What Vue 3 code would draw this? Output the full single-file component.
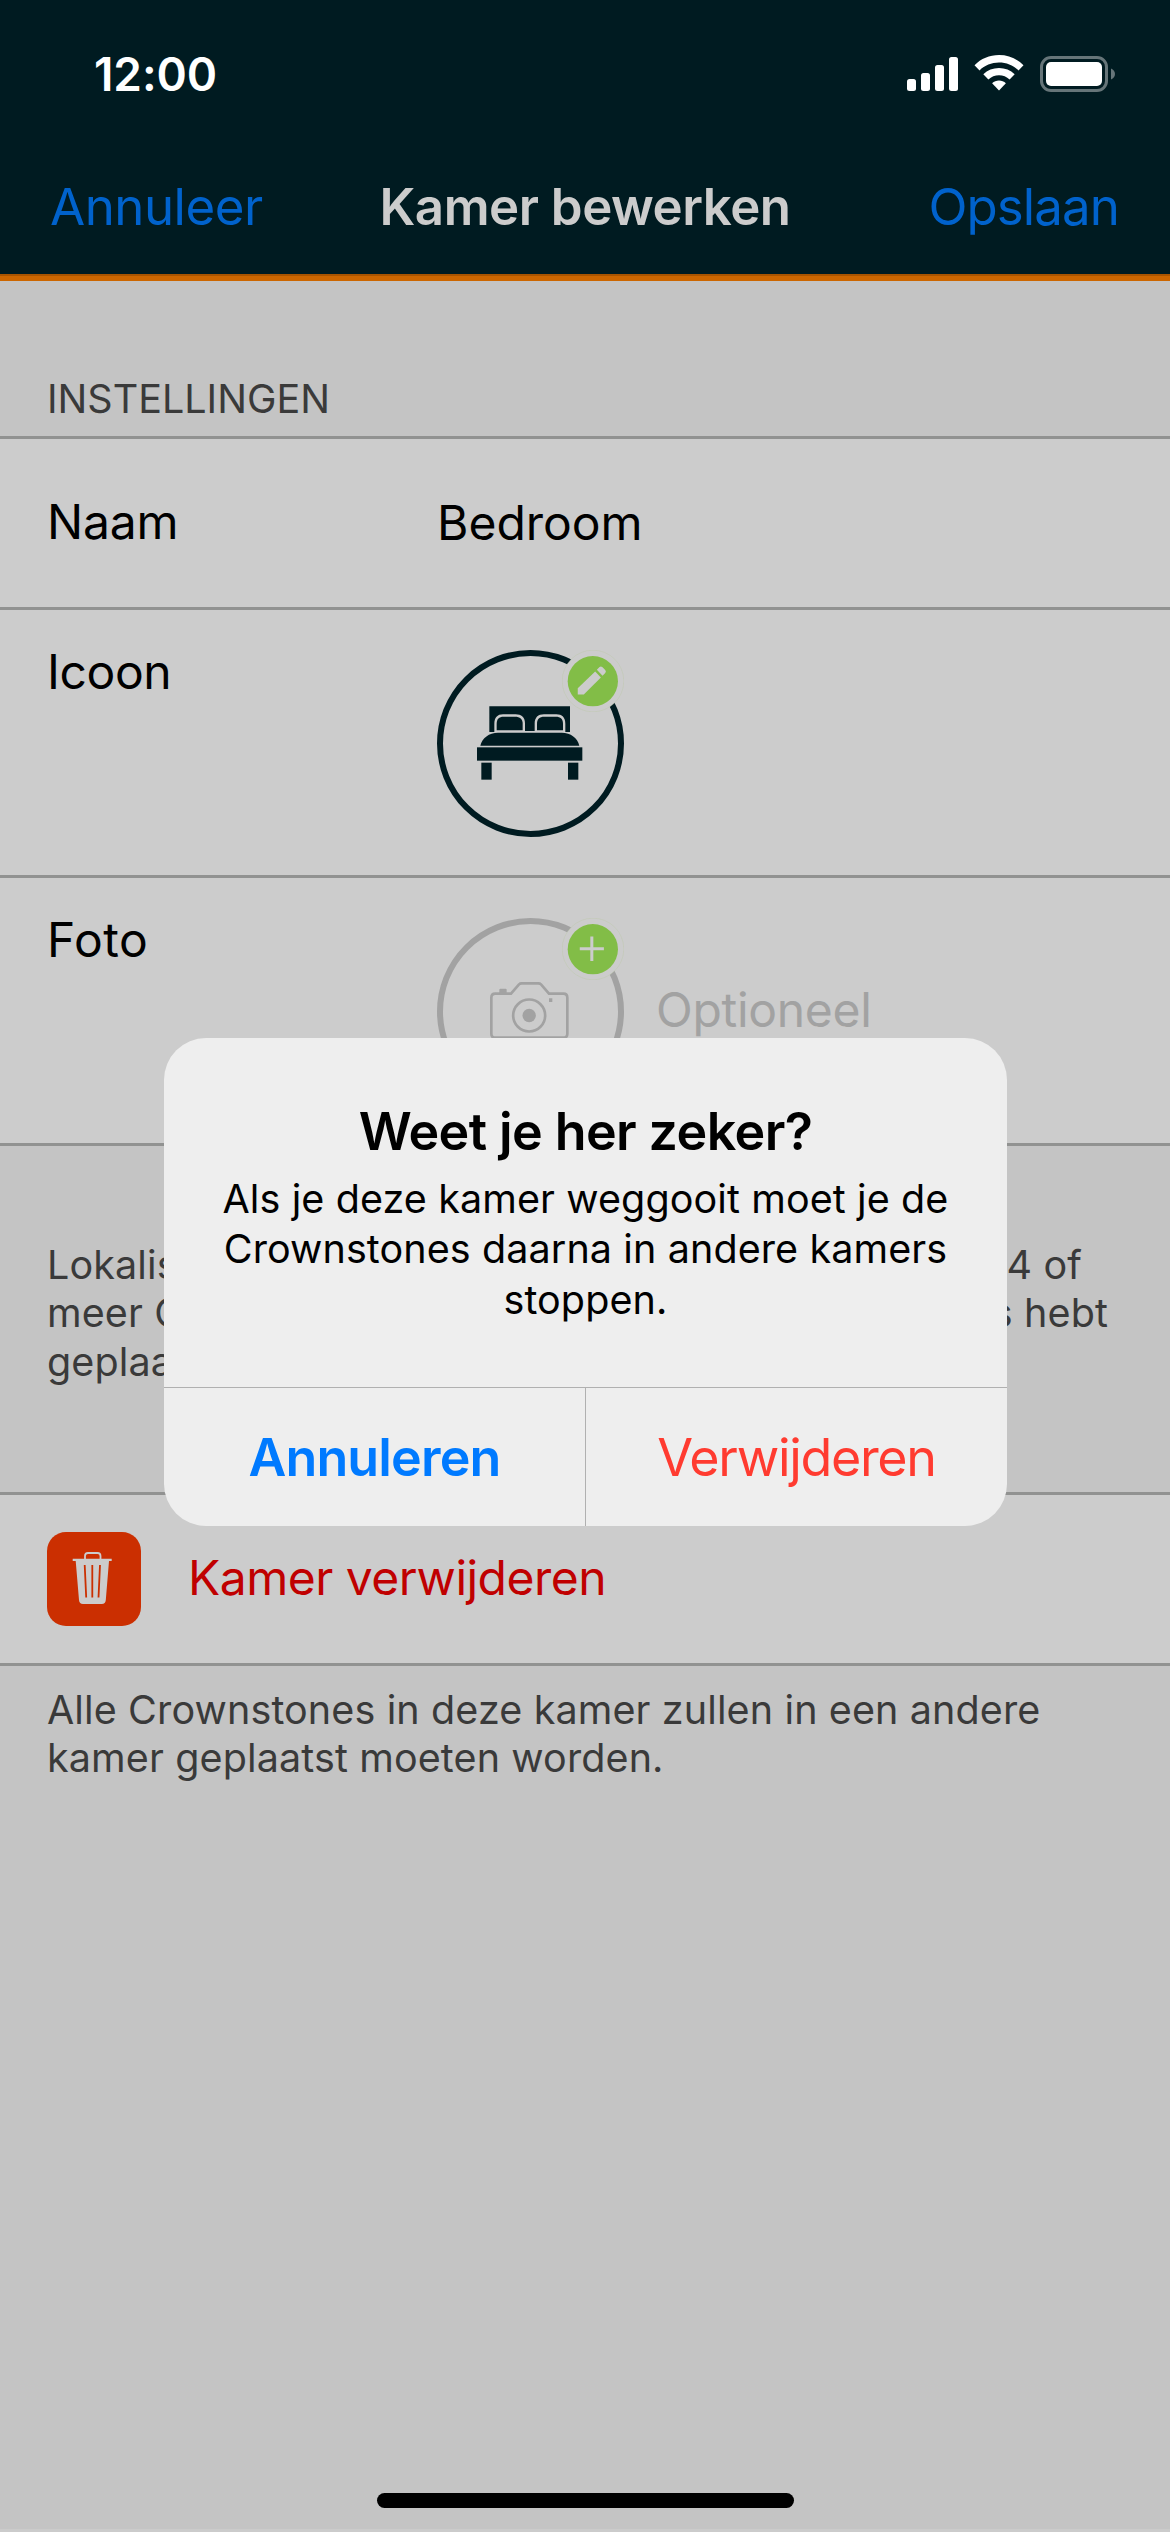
<script setup>
const signalBars = [
  { x: 0, y: 22, h: 12 },
  { x: 14, y: 16, h: 18 },
  { x: 28, y: 8, h: 26 },
  { x: 42, y: 0, h: 34 },
]
</script>

<template>
  <div class="screen">
    <header class="header">
      <div class="status">
        <span class="time">12:00</span>
        <div class="status-icons">
          <svg class="signal" width="51" height="34" viewBox="0 0 51 34">
            <rect v-for="b in signalBars" :key="b.x" :x="b.x" :y="b.y" width="9" :height="b.h" rx="2.5" fill="#fff" />
          </svg>
          <svg class="wifi" width="50" height="36" viewBox="0 0 50 36" fill="#fff">
            <path d="M25 0C34.500 0 43 3.700 49.500 10.200L44.500 15.400C39.300 10.300 32.500 7.500 25 7.500S10.700 10.300 5.500 15.400L.5 10.200C7 3.700 15.500 0 25 0Z" />
            <path d="M25 13C31 13 36.500 15.200 40.700 19.200L35.600 24.400C32.700 21.700 29 20.200 25 20.200S17.300 21.700 14.400 24.400L9.300 19.200C13.500 15.200 19 13 25 13Z" />
            <path d="M25 25.500C27.600 25.500 30 26.400 31.900 28.200L25 35.500L18.100 28.200C20 26.400 22.400 25.500 25 25.500Z" />
          </svg>
          <svg class="battery" width="75" height="36" viewBox="0 0 75 36">
            <rect x="1.500" y="1.500" width="65" height="33" rx="9.500" fill="none" stroke="#667579" stroke-width="3" />
            <rect x="6" y="6" width="56" height="24" rx="5" fill="#fff" />
            <path d="M71 12.500C73.500 13.500 75 15.500 75 18S73.500 22.500 71 23.500Z" fill="#667579" />
          </svg>
        </div>
      </div>
      <nav class="nav">
        <span class="nav-link cancel">Annuleer</span>
        <span class="nav-title">Kamer bewerken</span>
        <span class="nav-link save">Opslaan</span>
      </nav>
    </header>

    <main class="content">
      <h2 class="section-title">INSTELLINGEN</h2>

      <section class="rows">
        <div class="row row-name">
          <span class="label">Naam</span>
          <span class="value">Bedroom</span>
        </div>

        <div class="row row-tall">
          <span class="label label-icon">Icoon</span>
          <div class="circle">
            <svg width="187" height="187" viewBox="51 60 561 561">
              <circle cx="331.500" cy="340.500" r="271.500" fill="none" stroke="#001b21" stroke-width="18" />
              <g fill="#001b21">
                <path d="M208 229H450V306H436V282C436 262 426 253 409 253H372C354 253 344 263 344 280V303H315V280C315 262 304 253 287 253H249C232 253 223 263 223 282V306H208Z" />
                <path d="M230 301V282C230 267 237 260 251 260H285C300 260 308 267 308 281V301Z" />
                <path d="M351 301V281C351 267 358 260 373 260H407C422 260 429 267 429 282V301Z" />
                <path d="M181 347C186 324 207 308 234 308H425C452 308 473 324 478 347Z" />
                <rect x="171" y="352" width="316" height="40" />
                <rect x="184" y="398" width="31" height="51" />
                <rect x="444" y="398" width="31" height="51" />
              </g>
            </svg>
            <svg class="badge" width="62" height="62" viewBox="427 60 185 185">
              <circle cx="519.500" cy="152.500" r="92" fill="#cccccc" stroke="#b9c9a2" stroke-width="1" />
              <circle cx="519" cy="153" r="75" fill="#82bd47" />
              <path d="M474 193V174L526 124L543 142L492 193Z" fill="#ccc" />
              <path d="M531 119L539 111Q543 107 547 111L556 120Q560 124 556 129L548 137Z" fill="#ccc" />
            </svg>
          </div>
        </div>

        <div class="row row-tall">
          <span class="label label-photo">Foto</span>
          <div class="circle">
            <svg width="187" height="187" viewBox="51 84 561 561">
              <circle cx="331.500" cy="364.500" r="271.500" fill="none" stroke="#a2a2a2" stroke-width="18" />
              <g fill="none" stroke="#a2a2a2" stroke-width="8">
                <path d="M226 311H273L297 283Q300 280 305 280H355Q360 280 363 283L387 311H430Q442 311 442 323V431Q442 443 430 443H226Q214 443 214 431V323Q214 311 226 311Z" />
                <circle cx="327.500" cy="376.500" r="48" />
              </g>
              <circle cx="327.500" cy="376.500" r="20" fill="#a2a2a2" />
              <path d="M238 312V299Q238 296 241 296H257Q260 296 260 299V312ZM387 325H397V336H387Z" fill="#a2a2a2" />
            </svg>
            <svg class="badge" width="62" height="62" viewBox="427 84 185 185">
              <circle cx="519.500" cy="176.500" r="92" fill="#cccccc" stroke="#b9c9a2" stroke-width="1" />
              <circle cx="519" cy="177" r="75" fill="#82bd47" />
              <path d="M480 175.500H552M516 139V212" stroke="#ccc" stroke-width="9" />
            </svg>
          </div>
          <span class="optional">Optioneel</span>
        </div>
      </section>

      <div class="note note-location">
        <p class="note-line line-first"><span>Lokalisatie</span><span>4 of</span></p>
        <p class="note-line line-second"><span>meer Crownstones</span><span>kamers hebt</span></p>
        <p class="note-line"><span>geplaatst.</span></p>
      </div>

      <section class="rows">
        <div class="row row-delete">
          <span class="trash">
            <svg width="94" height="94" viewBox="0 0 94 94">
              <path d="M38 27.500V24Q38 21 41 21H50.500Q53.500 21 53.500 24V27.500" fill="none" stroke="#cccccc" stroke-width="1.800" />
              <path d="M25.700 26.700H64.700V29H62L58.800 68Q58.500 72 54.800 72H36Q32.300 72 32 68L28.700 29H25.700Z" fill="#cccccc" />
              <path d="M37.700 33L39.200 65.500M45.300 33V65.500M53 33L51.500 65.500" stroke="#cb2f01" stroke-width="1.800" fill="none" />
            </svg>
          </span>
          <span class="delete-label">Kamer verwijderen</span>
        </div>
      </section>

      <p class="note note-delete">Alle Crownstones in deze kamer zullen in een andere<br />kamer geplaatst moeten worden.</p>
    </main>

    <div class="alert">
      <div class="alert-body">
        <h1 class="alert-title">Weet je her zeker?</h1>
        <p class="alert-text">
          Als je deze kamer weggooit moet je de<br />Crownstones daarna in andere kamers<br />stoppen.
        </p>
      </div>
      <div class="alert-actions">
        <span class="action action-cancel">Annuleren</span>
        <span class="action action-delete">Verwijderen</span>
      </div>
    </div>

    <div class="home-indicator"></div>
  </div>
</template>

<style>
body {
  margin: 0;
}
</style>

<style scoped>
.screen {
  position: relative;
  width: 1170px;
  height: 2532px;
  overflow: hidden;
  box-sizing: border-box;
  background: #c4c4c4;
  border-bottom: 3px solid #cbcbcb;
  font-family: Inter, "Liberation Sans", sans-serif;
  color: #000;
}

h1,
h2,
p {
  margin: 0;
  font-weight: 400;
}

svg {
  display: block;
}

span {
  white-space: nowrap;
}

.header {
  height: 281px;
  box-sizing: border-box;
  background: #001b21;
  border-bottom: 5px solid #cc6600;
  box-shadow: inset 0 -2px 0 #a95400;
}

.status {
  height: 148px;
  display: flex;
  align-items: center;
  justify-content: space-between;
  padding: 0 55px 0 94px;
}

.time {
  font-size: 46px;
  font-weight: 600;
  color: #fff;
  letter-spacing: -0.1px;
}

.status-icons {
  display: flex;
  align-items: center;
}

.wifi {
  margin-left: 16px;
  margin-top: -2px;
}

.battery {
  margin-left: 16px;
}

.nav {
  height: 116px;
  display: grid;
  grid-template-columns: 1fr auto 1fr;
  align-items: center;
  padding: 0 50px;
  font-size: 51px;
}

.nav-link {
  color: #0062cc;
}

.cancel {
  letter-spacing: -0.5px;
}

.save {
  padding-right: 1px;
  text-align: right;
  letter-spacing: -0.9px;
}

.nav-title {
  font-weight: 600;
  color: #cccccc;
  letter-spacing: -0.5px;
}

.section-title {
  height: 155px;
  box-sizing: border-box;
  padding: 94px 0 0 47px;
  line-height: 48px;
  font-size: 39.500px;
  color: #3a3a3a;
}

.rows {
  border-top: 3px solid #919291;
}

.row {
  display: flex;
  padding-left: 47px;
  background: #cccccc;
  border-bottom: 3px solid #919291;
  font-size: 48px;
  line-height: 58px;
}

.label {
  width: 390px;
  letter-spacing: -0.2px;
}

.label-icon {
  letter-spacing: -0.4px;
}

.label-photo {
  letter-spacing: 0.5px;
}

.row-name {
  height: 168px;
  align-items: center;
}

.row-name .label {
  padding-bottom: 2px;
}

.row-tall {
  height: 265px;
}

.row-tall .label {
  padding-top: 33px;
}

.circle {
  position: relative;
  width: 187px;
  height: 187px;
  margin-top: 40px;
}

.badge {
  position: absolute;
  top: 0;
  right: 0;
}

.optional {
  margin: 103px 0 0 32px;
  color: #a2a2a2;
  letter-spacing: -0.3px;
}

.note {
  font-size: 39.500px;
  line-height: 48.300px;
  color: #3a3a3a;
  letter-spacing: 0.12px;
}

.note-location {
  height: 346px;
  box-sizing: border-box;
  padding: 95px 0 0 47px;
}

.note-line {
  display: flex;
  justify-content: space-between;
}

.line-first {
  width: 1035px;
}

.line-second {
  width: 1061px;
}

.row-delete {
  height: 168px;
  align-items: center;
}

.trash {
  width: 94px;
  height: 94px;
  border-radius: 19px;
  background: #cb2f01;
}

.delete-label {
  margin-left: 47px;
  padding-bottom: 2px;
  color: #c00000;
  letter-spacing: -0.52px;
}

.note-delete {
  padding: 20px 0 0 47px;
}

.alert {
  position: absolute;
  left: 164px;
  top: 1038px;
  width: 843px;
  height: 488px;
  border-radius: 42px;
  overflow: hidden;
  background: #eeeeee;
  text-align: center;
}

.alert-body {
  height: 349px;
  box-sizing: border-box;
  padding-top: 63px;
}

.alert-title {
  font-size: 52px;
  line-height: 62px;
  font-weight: 600;
  letter-spacing: -0.6px;
}

.alert-text {
  margin-top: 11px;
  font-size: 39.500px;
  line-height: 50.300px;
  letter-spacing: 0.1px;
}

.alert-actions {
  display: flex;
  height: 138px;
  border-top: 1px solid #b0b0b0;
}

.action {
  flex: 1;
  line-height: 140px;
  font-size: 52px;
}

.action-cancel {
  border-right: 1px solid #b0b0b0;
  font-weight: 600;
  color: #007aff;
  letter-spacing: -0.85px;
}

.action-delete {
  color: #ff3b30;
  letter-spacing: -1.35px;
}

.home-indicator {
  position: absolute;
  left: 377px;
  bottom: 21px;
  width: 417px;
  height: 15px;
  border-radius: 8px;
  background: #000;
}
</style>
